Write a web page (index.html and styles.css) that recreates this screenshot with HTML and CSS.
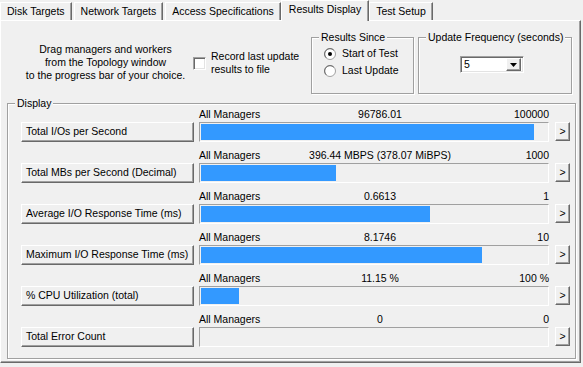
FILE: index.html
```html
<!DOCTYPE html>
<html>
<head>
<meta charset="utf-8">
<link rel="stylesheet" href="styles.css">
</head>
<body>
<div class="window">
  <div class="tabs">
    <div class="tab">Disk Targets</div>
    <div class="tab">Network Targets</div>
    <div class="tab">Access Specifications</div>
    <div class="tab active">Results Display</div>
    <div class="tab">Test Setup</div>
  </div>
  <div class="panel">
    <div class="top">
      <div class="hint">Drag managers and workers<br>from the Topology window<br>to the progress bar of your choice.</div>
      <div class="check">
        <span class="checkbox"></span>
        <span class="check-label">Record last update<br>results to file</span>
      </div>
      <div class="group since">
        <span class="group-title">Results Since</span>
        <div class="radio-row">
          <svg class="radio" width="12" height="12" viewBox="0 0 12 12"><circle cx="6" cy="6" r="5.5" fill="#fff" stroke="#a0a0a0"/><path d="M2.2 9.8A5 5 0 0 1 9.8 2.2" fill="none" stroke="#696969"/><circle cx="6" cy="6" r="2" fill="#000"/></svg>
          <span>Start of Test</span>
        </div>
        <div class="radio-row">
          <svg class="radio" width="12" height="12" viewBox="0 0 12 12"><circle cx="6" cy="6" r="5.5" fill="#fff" stroke="#a0a0a0"/><path d="M2.2 9.8A5 5 0 0 1 9.8 2.2" fill="none" stroke="#696969"/></svg>
          <span>Last Update</span>
        </div>
      </div>
      <div class="group freq">
        <span class="group-title">Update Frequency (seconds)</span>
        <div class="combo">
          <span class="combo-value">5</span>
          <span class="combo-btn"><svg width="7" height="4" viewBox="0 0 7 4"><path d="M0 0H7L3.5 4Z" fill="#000"/></svg></span>
        </div>
      </div>
    </div>

    <div class="group display">
      <span class="group-title">Display</span>

      <div class="row">
        <div class="row-head"><span>All Managers</span><span class="mid">96786.01</span><span class="max">100000</span></div>
        <div class="btn metric">Total I/Os per Second</div>
        <div class="bar"><div class="fill" style="width:333px"></div></div>
        <div class="btn more">&gt;</div>
      </div>

      <div class="row">
        <div class="row-head"><span>All Managers</span><span class="mid">396.44 MBPS (378.07 MiBPS)</span><span class="max">1000</span></div>
        <div class="btn metric">Total MBs per Second (Decimal)</div>
        <div class="bar"><div class="fill" style="width:135px"></div></div>
        <div class="btn more">&gt;</div>
      </div>

      <div class="row">
        <div class="row-head"><span>All Managers</span><span class="mid">0.6613</span><span class="max">1</span></div>
        <div class="btn metric">Average I/O Response Time (ms)</div>
        <div class="bar"><div class="fill" style="width:229px"></div></div>
        <div class="btn more">&gt;</div>
      </div>

      <div class="row">
        <div class="row-head"><span>All Managers</span><span class="mid">8.1746</span><span class="max">10</span></div>
        <div class="btn metric">Maximum I/O Response Time (ms)</div>
        <div class="bar"><div class="fill" style="width:281px"></div></div>
        <div class="btn more">&gt;</div>
      </div>

      <div class="row">
        <div class="row-head"><span>All Managers</span><span class="mid">11.15 %</span><span class="max">100 %</span></div>
        <div class="btn metric">% CPU Utilization (total)</div>
        <div class="bar"><div class="fill" style="width:38px"></div></div>
        <div class="btn more">&gt;</div>
      </div>

      <div class="row">
        <div class="row-head"><span>All Managers</span><span class="mid">0</span><span class="max">0</span></div>
        <div class="btn metric">Total Error Count</div>
        <div class="bar"><div class="fill" style="width:0px"></div></div>
        <div class="btn more">&gt;</div>
      </div>
    </div>
  </div>
</div>
</body>
</html>
```

FILE: styles.css
```css
* { box-sizing: border-box; }
html, body {
  margin: 0;
  background: #f0f0f0;
}
body {
  font-family: "Liberation Sans", Arial, sans-serif;
  font-size: 10.5px;
  color: #000;
  line-height: 13px;
}
.window {
  width: 583px;
  height: 367px;
}
.tabs {
  display: flex;
  align-items: flex-end;
  height: 20px;
  position: relative;
  z-index: 2;
}
.tab {
  height: 18px;
  padding: 2px 6px 0 6px;
  margin-right: 2px;
  border-top: 1px solid #fff;
  border-left: 1px solid #fff;
  border-right: 1px solid #696969;
  box-shadow: inset -1px 0 0 #a0a0a0;
  background: #f0f0f0;
  white-space: nowrap;
}
.tab.active {
  height: 21px;
  margin: 0 0 -1px -2px;
  padding: 2px 7px 0 7px;
}
.panel {
  width: 581px;
  height: 343px;
  border: 1px solid;
  border-color: #fff #696969 #696969 #fff;
  box-shadow: inset -1px -1px 0 #a0a0a0;
  padding-top: 16px;
}
.top {
  display: flex;
  align-items: flex-start;
  height: 57px;
  padding-left: 19px;
}
.hint {
  width: 171px;
  margin-top: 6px;
  text-align: center;
}
.check {
  width: 118px;
  margin-left: 2px;
  margin-top: 13px;
  display: flex;
  align-items: center;
  gap: 5px;
}
.checkbox {
  width: 13px;
  height: 13px;
  background: #fff;
  border: 1px solid;
  border-color: #a0a0a0 #fff #fff #a0a0a0;
  box-shadow: inset 1px 1px 0 #696969, inset -1px -1px 0 #e3e3e3;
}
.group {
  position: relative;
  border: 1px solid #a0a0a0;
  box-shadow: inset 1px 1px 0 #fff, 1px 1px 0 #fff;
}
.group-title {
  position: absolute;
  top: -7px;
  left: 7px;
  padding: 0 2px;
  background: #f0f0f0;
  white-space: nowrap;
}
.since {
  width: 103px;
  height: 57px;
  padding: 7px 0 0 12px;
}
.radio-row {
  display: flex;
  align-items: center;
  gap: 6px;
  height: 17px;
}
.radio { display: block; }
.freq {
  width: 154px;
  height: 57px;
  margin-left: 4px;
  padding: 18px 0 0 41px;
}
.combo {
  width: 64px;
  height: 17px;
  display: flex;
  align-items: center;
  justify-content: space-between;
  background: #fff;
  border: 1px solid;
  border-color: #a0a0a0 #fff #fff #a0a0a0;
  box-shadow: inset 1px 1px 0 #696969, inset -1px -1px 0 #e3e3e3;
  padding: 2px 2px 2px 3px;
}
.combo-value { line-height: 13px; }
.combo-btn {
  width: 15px;
  height: 13px;
  display: flex;
  align-items: center;
  justify-content: center;
  background: #f0f0f0;
  border: 1px solid;
  border-color: #fff #696969 #696969 #fff;
  box-shadow: inset -1px -1px 0 #a0a0a0;
}
.combo-btn svg { display: block; }
.display {
  width: 569px;
  height: 256px;
  margin: 9px 0 0 6px;
  padding: 4px 0 0 13px;
}
.row {
  display: grid;
  grid-template-columns: 173px 350px 15px;
  grid-template-rows: 13px 20px;
  column-gap: 5px;
  row-gap: 1px;
  margin-bottom: 7px;
}
.row-head {
  grid-column: 2 / 4;
  grid-row: 1;
  width: 362px;
  display: grid;
  grid-template-columns: 1fr auto 1fr;
  white-space: nowrap;
}
.row-head .max {
  justify-self: end;
  margin-right: 12px;
}
.btn {
  background: #f0f0f0;
  border: 1px solid;
  border-color: #fff #696969 #696969 #fff;
  box-shadow: inset -1px -1px 0 #a0a0a0;
  white-space: nowrap;
}
.metric {
  grid-column: 1;
  grid-row: 2;
  height: 20px;
  padding: 2px 0 0 4px;
}
.bar {
  grid-column: 2;
  grid-row: 2;
  height: 20px;
  border: 1px solid;
  border-color: #a0a0a0 #fff #fff #a0a0a0;
  padding: 1px;
}
.fill {
  height: 100%;
  background: #3399ff;
}
.more {
  grid-column: 3;
  grid-row: 2;
  align-self: start;
  margin-left: 1px;
  width: 15px;
  height: 19px;
  text-align: center;
  padding-top: 2px;
}
```
